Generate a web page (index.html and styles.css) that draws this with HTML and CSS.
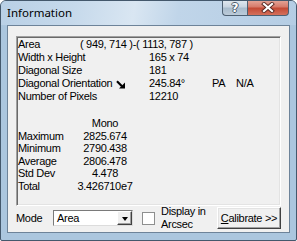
FILE: index.html
```html
<!DOCTYPE html>
<html>
<head>
<meta charset="utf-8">
<link rel="stylesheet" href="styles.css">
</head>
<body>
<div class="window">
  <div class="titlebar">
    <span class="title">Information</span>
    <div class="caption-btns">
      <div class="cbtn help">?</div>
      <div class="cbtn close">
        <svg width="14" height="11" viewBox="0 0 14 11">
          <path d="M3 2 L11 9 M11 2 L3 9" stroke="#5a2a24" stroke-width="4" stroke-linecap="square"/>
          <path d="M3 2 L11 9 M11 2 L3 9" stroke="#ffffff" stroke-width="2.2" stroke-linecap="square"/>
        </svg>
      </div>
    </div>
  </div>
  <div class="client">
    <div class="infobox">
      <div class="row"><span class="lbl short">Area</span><span>( 949, 714 )-( 1113, 787 )</span></div>
      <div class="row"><span class="lbl">Width x Height</span><span>165 x 74</span></div>
      <div class="row"><span class="lbl">Diagonal Size</span><span>181</span></div>
      <div class="row"><span class="lbl"><span>Diagonal Orientation</span><svg class="arrow" width="10" height="9" viewBox="0 0 10 9"><path d="M1 1.2 L6 6.2" stroke="#000" stroke-width="2.2"/><path d="M9 2.5 L9 8.5 L3 8.5 Z" fill="#000"/></svg></span><span class="val">245.84°</span><span class="pa">PA</span><span>N/A</span></div>
      <div class="row"><span class="lbl">Number of Pixels</span><span>12210</span></div>
      <div class="stats">
        <span></span><span class="sv head">Mono</span>
        <span class="sl">Maximum</span><span class="sv">2825.674</span>
        <span class="sl">Minimum</span><span class="sv">2790.438</span>
        <span class="sl">Average</span><span class="sv">2806.478</span>
        <span class="sl">Std Dev</span><span class="sv">4.478</span>
        <span class="sl">Total</span><span class="sv">3.426710e7</span>
      </div>
    </div>
    <div class="controls">
      <span class="mode-lbl">Mode</span>
      <div class="combo"><span class="combo-text">Area</span><span class="combo-btn"><span class="tri"></span></span></div>
      <span class="check"></span>
      <span class="check-lbl">Display in<br>Arcsec</span>
      <div class="button"><u>C</u>alibrate &gt;&gt;</div>
    </div>
  </div>
</div>
</body>
</html>
```

FILE: styles.css
```css
html, body {
  margin: 0;
  padding: 0;
  background: #ffffff;
}
body {
  font-family: "Liberation Sans", Arial, sans-serif;
  font-size: 11px;
  letter-spacing: -0.3px;
  color: #000;
}
.window {
  width: 297px;
  height: 241px;
  box-sizing: border-box;
  border: 1px solid #44586c;
  border-radius: 6px 6px 2px 2px;
  background: #abc6de;
  display: flex;
  flex-direction: column;
  overflow: hidden;
}
.titlebar {
  height: 24px;
  flex: none;
  display: flex;
  justify-content: space-between;
  align-items: flex-start;
  background: linear-gradient(100deg, #b9d0e6 0%, #c6d9eb 25%, #d9e6f2 45%, #c0d5e9 60%, #b5cde4 100%);
}
.title {
  font-family: "Noto Sans", "Open Sans", sans-serif;
  font-size: 11.5px;
  letter-spacing: 0;
  line-height: 16px;
  margin: 4px 0 0 6px;
  color: #000;
}
.caption-btns {
  display: flex;
  margin: -1px 7px 0 0;
}
.cbtn {
  height: 16px;
  box-sizing: border-box;
  border: 1px solid #4e6072;
  border-top: none;
  display: flex;
  align-items: center;
  justify-content: center;
}
.help {
  width: 25px;
  border-radius: 0 0 0 4px;
  border-right: none;
  background: linear-gradient(#e2e9f0 0%, #c9d5e1 45%, #a9bccd 55%, #bccbd9 100%);
  color: #fff;
  font-family: "DejaVu Sans", sans-serif;
  font-weight: bold;
  font-size: 12px;
  letter-spacing: 0;
  line-height: 14px;
  text-shadow: 1px 0 0 #4a5a6a, -1px 0 0 #4a5a6a, 0 1px 0 #4a5a6a, 0 -1px 0 #4a5a6a;
}
.close {
  width: 42px;
  border-radius: 0 0 4px 0;
  background: linear-gradient(#e6a99c 0%, #d77b6b 45%, #c44a35 55%, #d4705c 100%);
}
.client {
  flex: none;
  height: 208px;
  margin: 0 6px;
  box-sizing: border-box;
  border: 1px solid #6d8399;
  background: #f0f0f0;
  display: flex;
  flex-direction: column;
}
.infobox {
  margin: 10px 8px 0;
  height: 170px;
  box-sizing: border-box;
  border-top: 1px solid #a0a0a0;
  border-left: 1px solid #a0a0a0;
  border-right: 1px solid #ffffff;
  border-bottom: 1px solid #ffffff;
  box-shadow: inset 1px 1px 0 #696969, inset -1px -1px 0 #e3e3e3;
  padding: 1px 0 0 1px;
}
.row {
  display: flex;
  line-height: 13px;
  height: 13px;
  white-space: nowrap;
}
.lbl {
  width: 131px;
  flex: none;
  display: flex;
  align-items: center;
}
.lbl.short {
  width: 62px;
}
.arrow {
  margin-left: 4px;
  margin-top: 1px;
}
.val {
  width: 63px;
  flex: none;
}
.pa {
  width: 24px;
  flex: none;
}
.stats {
  margin-top: 14px;
  display: grid;
  grid-template-columns: 57px 60px;
  grid-auto-rows: 12.5px;
  line-height: 12.5px;
  white-space: nowrap;
}
.stats .head {
  line-height: 13px;
}
.stats > span:nth-child(1),
.stats > span:nth-child(2) {
  height: 13px;
}
.sv {
  text-align: center;
}
.controls {
  margin: 1px 8px 0;
  height: 22px;
  display: flex;
  align-items: center;
}
.mode-lbl {
  width: 37px;
  flex: none;
}
.combo {
  width: 80px;
  height: 16px;
  box-sizing: border-box;
  flex: none;
  display: flex;
  background: #fff;
  border-top: 1px solid #7a7a7a;
  border-left: 1px solid #7a7a7a;
  border-right: 1px solid #dcdcdc;
  border-bottom: 1px solid #dcdcdc;
}
.combo-text {
  flex: 1;
  padding-left: 3px;
  line-height: 14px;
}
.combo-btn {
  width: 15px;
  box-sizing: border-box;
  background: #f0f0f0;
  border-top: 1px solid #ffffff;
  border-left: 1px solid #ffffff;
  border-right: 1px solid #404040;
  border-bottom: 1px solid #404040;
  box-shadow: inset -1px -1px 0 #a0a0a0;
  display: flex;
  align-items: center;
  justify-content: center;
}
.tri {
  width: 0;
  height: 0;
  border-left: 3.5px solid transparent;
  border-right: 3.5px solid transparent;
  border-top: 4px solid #000;
  margin-top: 1px;
}
.check {
  width: 13px;
  height: 13px;
  box-sizing: border-box;
  flex: none;
  margin-left: 9px;
  background: #fff;
  border: 1px solid #8e8f8f;
}
.check-lbl {
  margin-left: 6px;
  line-height: 13px;
  white-space: nowrap;
}
.button {
  margin-left: auto;
  width: 64px;
  height: 22px;
  box-sizing: border-box;
  flex: none;
  background: #f0f0f0;
  border-top: 1px solid #ffffff;
  border-left: 1px solid #ffffff;
  border-right: 1px solid #404040;
  border-bottom: 1px solid #404040;
  box-shadow: inset -1px -1px 0 #a0a0a0, inset 1px 1px 0 #e3e3e3;
  display: flex;
  align-items: center;
  justify-content: center;
  white-space: nowrap;
}
.button u {
  text-decoration: underline;
}
```
